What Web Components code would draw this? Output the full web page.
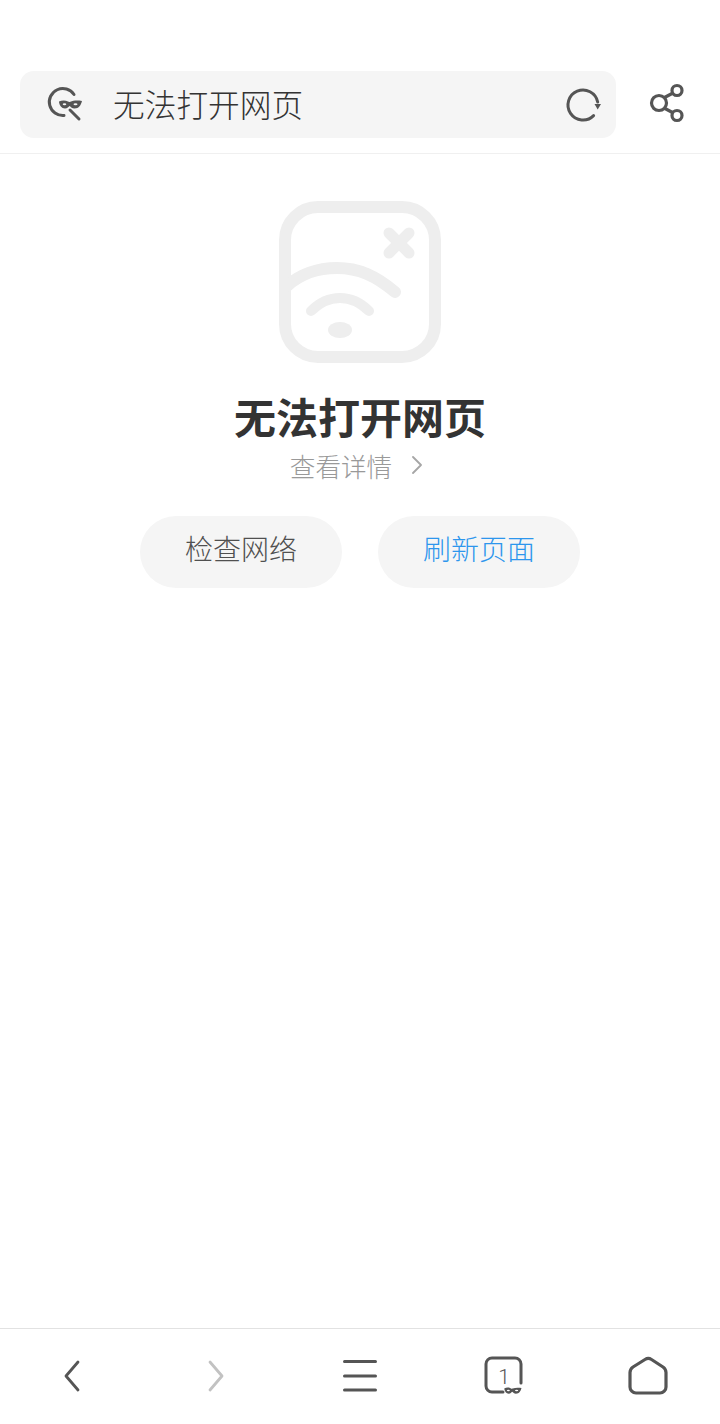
<!DOCTYPE html>
<html lang="zh">
<head>
<meta charset="utf-8">
<title>无法打开网页</title>
<style>
html,body{margin:0;padding:0;background:#fff}
body{width:720px;height:1424px;overflow:hidden;display:flex;flex-direction:column;font-family:"Noto Sans CJK SC","Noto Sans",sans-serif}
</style>
</head>
<body>
<browser-topbar>无法打开网页</browser-topbar>
<error-page>
  <span slot="title">无法打开网页</span>
  <span slot="detail">查看详情</span>
  <pill-button>检查网络</pill-button>
  <pill-button accent>刷新页面</pill-button>
</error-page>
<browser-nav></browser-nav>

<script>
function shadow(el, html){ el.attachShadow({mode:'open'}).innerHTML = html; }
const MASK = 'M19 24.500c3-1.500 6.500-1.500 9 0 .8.500 1.500.500 2.300.200 3-1.300 7.500-1.500 11.700-.7-1 4-3 7.500-7.500 7.500-2.500 0-3.500-1.500-5-2.500-1 .8-2 2.500-4.500 2.500-3.500 0-5.500-3-6-6.500z';

class BrowserTopbar extends HTMLElement{
  connectedCallback(){ if(this.shadowRoot) return; shadow(this,`
  <style>
    :host{display:block;flex:none;box-sizing:border-box;height:154px;padding:71px 0 0 20px;border-bottom:1px solid #f0f0f0;background:#fff}
    .row{display:flex;align-items:flex-start}
    .bar{width:596px;height:67px;box-sizing:border-box;background:#f5f5f5;border-radius:14px;display:flex;align-items:center;padding:0 0 0 20px}
    svg{display:block;flex:none}
    .text{flex:1;margin-left:19px;font-size:31.7px;line-height:67px;color:#333;font-weight:300;white-space:nowrap;margin-top:-2px;opacity:.999}
    .share{margin:6px 0 0 21px}
  </style>
  <div class="row">
    <div class="bar">
      <svg width="54" height="55" viewBox="0 0 54 55" fill="none" stroke="#555">
        <path d="M34 17.500A13.500 13.500 0 1 0 24 38.500" stroke-width="3" stroke-linecap="round"/>
        <path d="M30 33l9 9" stroke-width="3" stroke-linecap="round"/>
        <path d="${MASK}" fill="#555" stroke="none"/>
        <ellipse cx="24.500" cy="27.300" rx="1.800" ry="1" fill="#f5f5f5" stroke="none"/>
        <ellipse cx="35.500" cy="27.300" rx="2" ry="1" fill="#f5f5f5" stroke="none"/>
      </svg>
      <div class="text"><slot></slot></div>
      <svg width="44" height="44" viewBox="0 0 44 44" fill="none" stroke="#555" style="margin-right:11px">
        <path d="M36.700 19A15 15 0 1 0 32.600 32.600" stroke-width="3" stroke-linecap="round"/>
        <path d="M33.500 21h6.500l-3.300 5.500z" fill="#555" stroke="none"/>
      </svg>
    </div>
    <svg class="share" width="54" height="54" viewBox="0 0 54 54" fill="none" stroke="#555" stroke-width="3.200">
      <circle cx="22" cy="26" r="7.500"/>
      <circle cx="40" cy="13.500" r="5"/>
      <circle cx="40" cy="38.500" r="5"/>
      <path d="M27.500 20.500l8.500-4.500M28 31.500l7.500 4"/>
    </svg>
  </div>`);}
}
customElements.define('browser-topbar',BrowserTopbar);

class PillButton extends HTMLElement{
  connectedCallback(){ if(this.shadowRoot) return; shadow(this,`
  <style>
    :host{display:flex;align-items:center;justify-content:center;width:202px;height:72px;border-radius:36px;background:#f5f5f5;color:#505050;font-size:28px;font-weight:300;line-height:1;padding-bottom:8px;box-sizing:border-box}
    :host([accent]){color:#2d96ed}
    span{opacity:.999}
  </style><span><slot></slot></span>`);}
}
customElements.define('pill-button',PillButton);

class ErrorPage extends HTMLElement{
  connectedCallback(){ if(this.shadowRoot) return; shadow(this,`
  <style>
    :host{display:flex;flex:1;flex-direction:column;align-items:center;padding-top:47px;background:#fff}
    svg{display:block}
    .title{margin-top:26px;font-size:42px;line-height:54px;font-weight:700;color:#333;white-space:nowrap;opacity:.999}
    .detail{margin-top:2px;height:40px;display:flex;align-items:center;font-size:25.600px;font-weight:300;color:#999;margin-right:6px;opacity:.999}
    .detail svg{margin-left:18px}
    .actions{display:flex;gap:36px;margin-top:31px}
  </style>
  <svg width="162" height="162" viewBox="0 0 162 162" fill="none" stroke="#eeeeee" stroke-linecap="round">
    <rect x="6" y="6" width="150" height="150" rx="33" stroke-width="12"/>
    <path d="M110 32l20 20M130 32l-20 20" stroke-width="11"/>
    <path d="M8 85c12-11 30-18 50-18 22 0 39 8 58 24" stroke-width="12"/>
    <path d="M32 110c8-8 17-13 29-13s21 5 29 13" stroke-width="10"/>
    <ellipse cx="61" cy="129" rx="12" ry="8" fill="#eeeeee" stroke="none"/>
  </svg>
  <div class="title"><slot name="title"></slot></div>
  <div class="detail"><slot name="detail"></slot>
    <svg width="14" height="20" viewBox="0 0 14 20" fill="none" stroke="#a6a6a6" stroke-width="1.800" stroke-linecap="round" stroke-linejoin="round"><path d="M3 2l8 8-8 8"/></svg>
  </div>
  <div class="actions"><slot></slot></div>`);}
}
customElements.define('error-page',ErrorPage);

class BrowserNav extends HTMLElement{
  connectedCallback(){ if(this.shadowRoot) return; shadow(this,`
  <style>
    :host{display:grid;flex:none;grid-template-columns:repeat(5,144px);height:96px;box-sizing:border-box;border-top:1px solid #e2e2e2;background:#fff}
    .i{display:flex;align-items:center;justify-content:center}
    svg{display:block;margin-bottom:1px}
    text{font-family:Roboto,"Liberation Sans",sans-serif;font-weight:300;opacity:.999}
  </style>
  <div class="i"><svg width="48" height="48" viewBox="0 0 48 48" fill="none" stroke="#555" stroke-width="2.800" stroke-linecap="round" stroke-linejoin="round"><path d="M30 10L18 24l12 14"/></svg></div>
  <div class="i"><svg width="48" height="48" viewBox="0 0 48 48" fill="none" stroke="#c2c2c2" stroke-width="2.800" stroke-linecap="round" stroke-linejoin="round"><path d="M18 10l12 14-12 14"/></svg></div>
  <div class="i"><svg width="48" height="48" viewBox="0 0 48 48" fill="none" stroke="#555" stroke-width="3" stroke-linecap="round"><path d="M8.500 9.500h31M8.500 24h31M8.500 38h31"/></svg></div>
  <div class="i"><svg width="48" height="48" viewBox="0 0 48 48" fill="none" stroke="#555" stroke-width="3" stroke-linecap="round" stroke-linejoin="round">
    <path d="M41 31V12a6 6 0 0 0-6-6H12a6 6 0 0 0-6 6v22a6 6 0 0 0 6 6h11"/>
    <text x="24" y="31.500" font-size="21" text-anchor="middle" fill="#555" stroke="none">1</text>
    <g transform="translate(10 18) scale(.75)"><path d="${MASK}" fill="#555" stroke="none"/>
    <ellipse cx="24.500" cy="27.300" rx="2" ry="1.100" fill="#fff" stroke="none"/>
    <ellipse cx="35.500" cy="27.300" rx="2.200" ry="1.100" fill="#fff" stroke="none"/></g>
  </svg></div>
  <div class="i"><svg width="48" height="48" viewBox="0 0 48 48" fill="none" stroke="#555" stroke-width="3.200" stroke-linejoin="round"><path d="M21 7.500a6 6 0 0 1 6.500 0l11.500 7.500a7 7 0 0 1 3 5.500V35a6 6 0 0 1-6 6H12a6 6 0 0 1-6-6V20.500a7 7 0 0 1 3-5.500z"/></svg></div>`);}
}
customElements.define('browser-nav',BrowserNav);
</script>
</body>
</html>
